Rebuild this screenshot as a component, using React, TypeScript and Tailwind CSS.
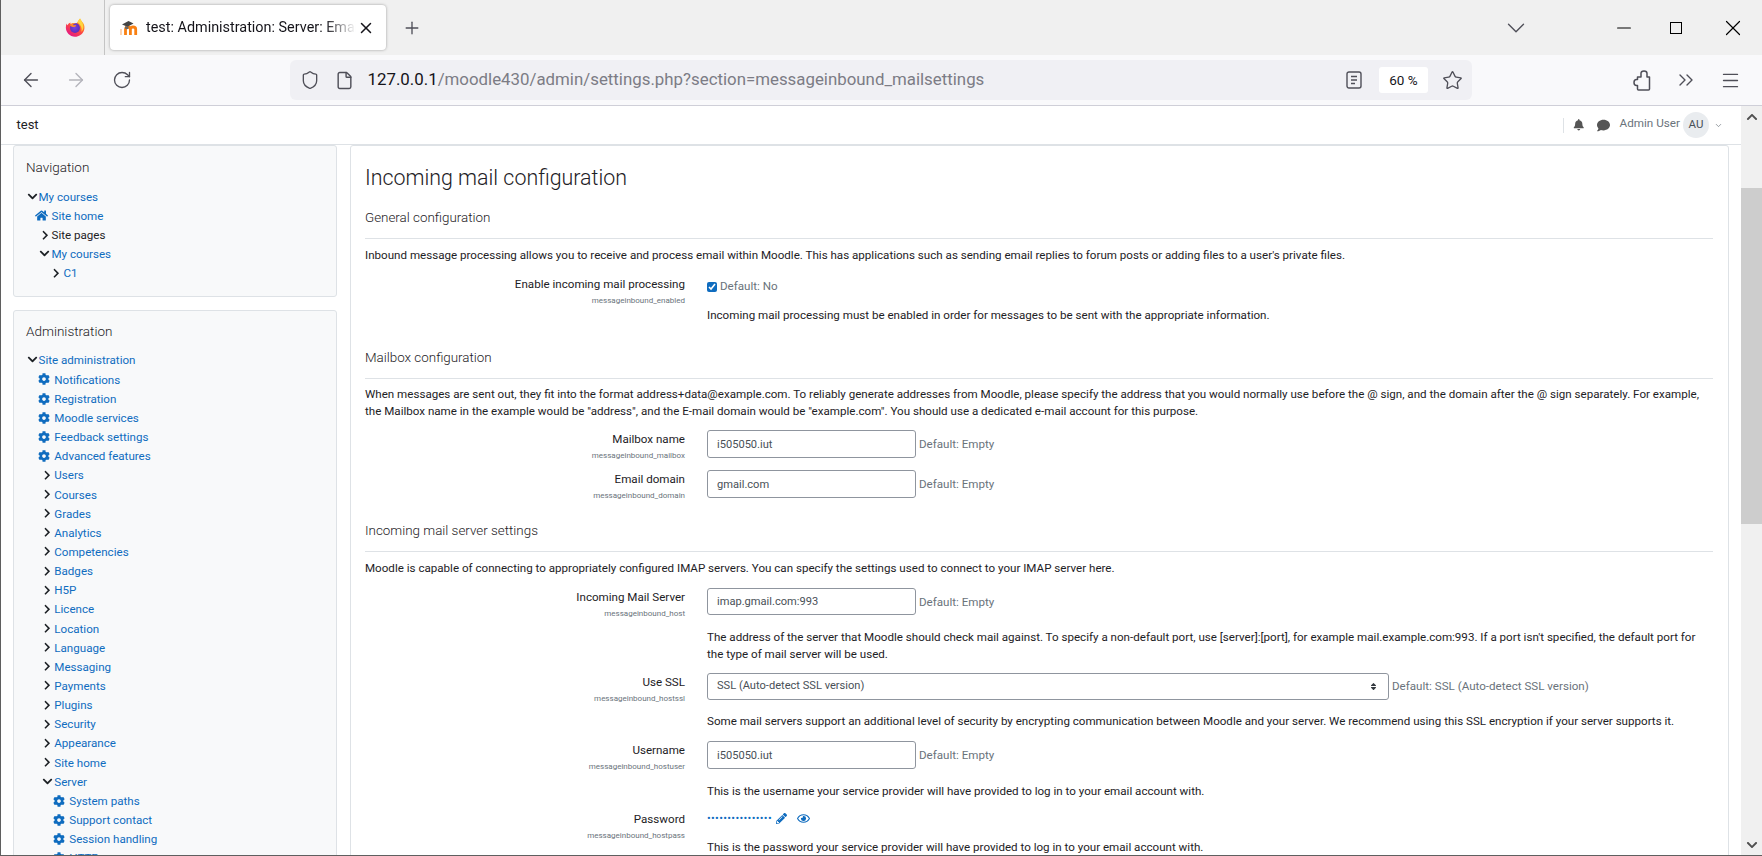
import React from "react";
import { ArrowLeft, ArrowRight, RotateCw, Shield, File, Star, ChevronsRight, Menu, X, Plus, ChevronDown, Minus } from "lucide-react";
import { FaChevronRight, FaChevronDown, FaChevronUp, FaHome, FaCog, FaPencilAlt, FaRegEye, FaBell, FaComment, FaSort } from "react-icons/fa";

const font = "font-['Roboto','Noto_Sans',sans-serif]";

function FirefoxLogo() {
  return (
    <svg width="22" height="22" viewBox="0 0 24 24">
      <defs>
        <linearGradient id="ffa" x1="0.8" y1="0.1" x2="0.2" y2="0.95">
          <stop offset="0" stopColor="#ffb322" />
          <stop offset="0.45" stopColor="#ff4f3a" />
          <stop offset="1" stopColor="#e31587" />
        </linearGradient>
        <radialGradient id="ffb" cx="0.45" cy="0.45" r="0.6">
          <stop offset="0" stopColor="#7542e5" />
          <stop offset="1" stopColor="#5b2bb5" />
        </radialGradient>
      </defs>
      <path d="M17.5 1.5c.6 2 2.2 3.1 3.4 5 1.6 2.4 1.9 5.7.8 8.4-1.500 3.900-5.400 6.600-9.700 6.600-5.600 0-10-4.500-10-10 0-1.700.4-3.200 1-4.400.2 1 .5 1.400 1 1.900.5-1.500 1.700-2.600 3-3-.2.7-.1 1.200.3 1.700 1.800-.6 3.800-.3 5.600.5 1.200-2 2.900-4.400 4.600-6.700z" fill="url(#ffa)" />
      <circle cx="12" cy="12" r="5.4" fill="url(#ffb)" />
      <path d="M6.500 8.500c1.600-1.600 4.400-2.400 6.800-1.600-2 .2-3.400 1-3.600 2.200h3.200c.3 0 .5.4.3.6-.7.6-1.600 1-2.600 1.200-1.200.2-2.400-.2-3.300-1-.4-.4-.7-.9-.8-1.400z" fill="#ff8a2a" />
      <path d="M17.500 1.500c1.600 3 3.600 5.500 3.600 9.300 0 2.200-.9 4-2.200 5.400.9-2.900.2-6.100-2-8.400-.7-.7-1.400-1.200-2.300-1.700.6-1.700 1.600-3.300 2.900-4.600z" fill="#ffd53d" />
    </svg>
  );
}

function MoodleLogo() {
  return (
    <svg width="21" height="16" viewBox="0 0 21 16">
      <path d="M1 9v6" stroke="#fbc9a0" strokeWidth="1.6" fill="none" />
      <path d="M5.500 15V9.200c0-1.400 1-2.200 2.400-2.200s2.500.8 2.500 2.200V15M10.400 9.200c0-1.400 1.100-2.200 2.600-2.200s2.700.8 2.700 2.200V15" stroke="#f98012" strokeWidth="2.8" fill="none" />
      <path d="M2 4.600 8.500 1l5 2.400-6 3.400z" fill="#444" />
      <path d="M5 6.200v2.400c1.200.8 2.400.8 3.500.2V6.200L7.400 6.800z" fill="#666" />
    </svg>
  );
}

function PuzzleIcon() {
  return (
    <svg width="18" height="21" viewBox="0 0 18 21" fill="none" stroke="#4f4f58" strokeWidth="1.5" strokeLinejoin="round">
      <path d="M4.500 7H8V3.200C8 1.700 9.500 1 11 1s3 .8 3 2.500V7h2.500v12a1 1 0 0 1-1 1h-10a1 1 0 0 1-1-1v-3.500h-1C2 15.500 1 14 1 12.500S2 9.500 3.500 9.500h1z" />
    </svg>
  );
}

type RowProps = { text: string; kind: "open0" | "home" | "gear" | "closed" | "closedDark" | "open1" | "c1" | "sub" | "openNav1" };

function TreeRow({ text, kind }: RowProps) {
  const dark = kind === "closedDark";
  const label = dark ? "text-[#1d2125]" : "text-[#0f6cbf]";
  let icon: React.ReactNode = null;
  if (kind === "open0") icon = <span className="w-[11.5px] shrink-0 flex"><FaChevronDown className="text-[11px] text-[#1d2125]" /></span>;
  if (kind === "home") icon = <span className="ml-[8px] w-[16.5px] shrink-0 flex"><FaHome className="text-[13px] text-[#0f6cbf]" /></span>;
  if (kind === "gear") icon = <span className="ml-[11px] w-[16.3px] shrink-0 flex"><FaCog className="text-[12px] text-[#0f6cbf]" /></span>;
  if (kind === "closed" || kind === "closedDark") icon = <span className={(kind === "closed" ? "ml-[15px] w-[12.3px]" : "ml-[12.500px] w-[12px]") + " shrink-0 flex"}><FaChevronRight className="text-[10.500px] text-[#1d2125]" /></span>;
  if (kind === "open1") icon = <span className="ml-[14.500px] w-[12.800px] shrink-0 flex"><FaChevronDown className="text-[11px] text-[#1d2125]" /></span>;
  if (kind === "openNav1") icon = <span className="ml-[11.500px] w-[13px] shrink-0 flex"><FaChevronDown className="text-[11px] text-[#1d2125]" /></span>;
  if (kind === "c1") icon = <span className="ml-[24px] w-[12.500px] shrink-0 flex"><FaChevronRight className="text-[10.500px] text-[#1d2125]" /></span>;
  if (kind === "sub") icon = <span className="ml-[26px] w-[16.300px] shrink-0 flex"><FaCog className="text-[12px] text-[#0f6cbf]" /></span>;
  return (
    <div className={"h-[19.150px] flex items-center text-[11.600px] whitespace-nowrap [&_svg]:-translate-y-px " + label}>
      {icon}
      <span>{text}</span>
    </div>
  );
}

function Section({ title }: { title: string }) {
  return (
    <div className="h-[32px] border-b border-[#dee2e6] text-[13.400px] leading-[20px] font-light text-[#1d2125]">
      <div className="translate-y-px">{title}</div>
    </div>
  );
}

function Label({ title, id }: { title: string; id: string }) {
  return (
    <div className="w-[320px] h-[26px] mr-[22px] shrink-0 text-right translate-y-px">
      <div className="h-[17px] leading-[17px] text-[11.600px] text-[#1d2125]">{title}</div>
      <div className="h-[13px] leading-[13px] mt-[1px] text-[8px] text-[#6a737b]">{id}</div>
    </div>
  );
}

function TextInput({ value, h }: { value: string; h: string }) {
  return (
    <div className="flex items-center">
      <input readOnly value={value} className={"w-[209px] border border-[#8f959e] rounded-[3px] pl-[9px] text-[11.100px] text-[#495057] bg-white outline-none " + h} />
      <span className="ml-[3px] text-[11.600px] text-[#6a737b] translate-y-px">Default: Empty</span>
    </div>
  );
}

const P = "text-[11.600px] leading-[17px] text-[#1d2125] translate-y-px";

export default function App() {
  return (
    <div className={"w-[1762px] h-[856px] overflow-hidden flex flex-col bg-white border-l border-b border-[#5f5f5f] " + font}>
      {/* tab strip */}
      <div className="h-[55px] shrink-0 bg-[#f0f0f0] flex items-center text-[#15141a]">
        <div className="w-[104px] h-full border-r border-[#c4c4c4] flex items-center justify-end pr-[18px] shrink-0"><FirefoxLogo /></div>
        <div className="ml-[5px] w-[276px] h-[45px] rounded-[4px] bg-white shadow-[0_0_3px_rgba(0,0,0,0.35)] flex items-center pl-[10px] shrink-0">
          <MoodleLogo />
          <span className="ml-[5px] w-[210px] overflow-hidden whitespace-nowrap text-[14.400px] [mask-image:linear-gradient(to_right,#000_85%,transparent)]">test: Administration: Server: Email</span>
          <X size={18} strokeWidth={2} className="ml-[1px]" />
        </div>
        <Plus size={20} strokeWidth={1.6} className="ml-[16px] text-[#4f4f58]" />
        <ChevronDown size={30} strokeWidth={1.1} className="ml-auto mr-[82px] text-[#4f4f58]" />
        <Minus size={22} strokeWidth={1.2} className="mr-[35px] text-black" />
        <div className="w-[12px] h-[12px] border border-black mr-[38px]" />
        <X size={26} strokeWidth={1.1} className="mr-[16px] text-black" />
      </div>
      {/* toolbar */}
      <div className="h-[51px] shrink-0 bg-[#f9f9fb] border-b border-[#cfcfd8] flex items-center text-[#4f4f58]">
        <ArrowLeft size={22} strokeWidth={1.5} className="ml-[19px]" />
        <ArrowRight size={22} strokeWidth={1.5} className="ml-[23px] text-[#b4b4bb]" />
        <RotateCw size={20} strokeWidth={1.6} className="ml-[25px]" />
        <div className="ml-[158px] w-[1182px] h-[40px] rounded-[6px] bg-[#f0f0f4] flex items-center">
          <Shield size={20} strokeWidth={1.6} className="ml-[10px]" />
          <File size={19} strokeWidth={1.8} className="ml-[15px]" />
          <span className="ml-[13.500px] text-[16.850px] text-[#7c7c85] whitespace-nowrap"><span className="text-[#15141a]">127.0.0.1</span>/moodle430/admin/settings.php?section=messageinbound_mailsettings</span>
          <svg width="16" height="18" viewBox="0 0 16 18" fill="none" stroke="#4f4f58" strokeWidth="1.4" className="ml-auto"><rect x="1" y="1" width="14" height="16" rx="2" /><path d="M5 5.500h6M5 9h6M5 12.500h4" /></svg>
          <div className="ml-[17px] w-[49px] h-[26px] rounded-[3px] bg-white flex items-center justify-center text-[13.500px] text-[#15141a]">60 %</div>
          <Star size={21} strokeWidth={1.5} className="ml-[14px] mr-[9px]" />
        </div>
        <div className="ml-[161px]"><PuzzleIcon /></div>
        <ChevronsRight size={24} strokeWidth={1.4} className="ml-[23px]" />
        <Menu size={21} strokeWidth={1.5} className="ml-[22px]" />
      </div>
      {/* page */}
      <div className="flex-1 min-h-0 flex">
        <div className="flex-1 min-w-0 flex flex-col overflow-hidden">
          <div className="h-[39px] shrink-0 border-b border-[#dee2e6] flex items-center pl-[15.500px] text-[#1d2125]">
            <span className="text-[13px]">test</span>
            <div className="ml-auto w-px h-[15px] bg-[#dee2e6]" />
            <FaBell className="ml-[9.500px] text-[11.500px] text-[#555]" />
            <FaComment className="ml-[12px] text-[13px] text-[#555]" />
            <span className="ml-[10px] mb-[3px] text-[11.700px] text-[#6a737b]">Admin User</span>
            <div className="ml-[3px] w-[26px] h-[26px] rounded-full bg-[#e9ecef] flex items-center justify-center text-[11.500px] text-[#495057]">AU</div>
            <ChevronDown size={9} strokeWidth={1.8} className="ml-[5px] mr-[18px] text-[#6a737b]" />
          </div>
          <div className="flex-1 min-h-0 flex gap-[13px] pl-[12px] pr-[12px]">
            {/* sidebar */}
            <div className="w-[324px] shrink-0">
              <div className="border border-[#dee2e6] rounded-[3px] bg-[#f8f9fa] pl-[13px] pt-[12px] pb-[12px]">
                <div className="h-[20px] -ml-px -translate-y-px leading-[20px] text-[13.500px] font-light text-[#1d2125]">Navigation</div>
                <div className="mt-[10px]">
                  <TreeRow kind="open0" text="My courses" />
                  <TreeRow kind="home" text="Site home" />
                  <TreeRow kind="closedDark" text="Site pages" />
                  <TreeRow kind="openNav1" text="My courses" />
                  <TreeRow kind="c1" text="C1" />
                </div>
              </div>
              <div className="mt-[13px] border border-[#dee2e6] rounded-[3px] bg-[#f8f9fa] pl-[13px] pt-[10px] h-[700px]">
                <div className="h-[20px] -ml-px leading-[20px] text-[13.500px] font-light text-[#1d2125]">Administration</div>
                <div className="mt-[10px]">
                  <div className="mb-px"><TreeRow kind="open0" text="Site administration" /></div>
                  {["Notifications", "Registration", "Moodle services", "Feedback settings", "Advanced features"].map((t) => <TreeRow key={t} kind="gear" text={t} />)}
                  {["Users", "Courses", "Grades", "Analytics", "Competencies", "Badges", "H5P", "Licence", "Location", "Language", "Messaging", "Payments", "Plugins", "Security", "Appearance", "Site home"].map((t) => <TreeRow key={t} kind="closed" text={t} />)}
                  <TreeRow kind="open1" text="Server" />
                  {["System paths", "Support contact", "Session handling", "HTTP"].map((t) => <TreeRow key={t} kind="sub" text={t} />)}
                </div>
              </div>
            </div>
            {/* main */}
            <div className="flex-1 min-w-0 h-[760px] border border-[#dee2e6] rounded-[3px] bg-white pl-[14px] pr-[15px] pt-[15px]">
              <div className="h-[30px] leading-[30px] translate-y-[1.500px] text-[21.400px] font-light text-[#1d2125]">Incoming mail configuration</div>
              <div className="mt-[16px]"><Section title="General configuration" /></div>
              <div className={"mt-[7px] " + P}>Inbound message processing allows you to receive and process email within Moodle. This has applications such as sending email replies to forum posts or adding files to a user's private files.</div>
              <div className="mt-[12px] flex">
                <Label title="Enable incoming mail processing" id="messageinbound_enabled" />
                <div className="flex-1">
                  <div className="mt-[1px] h-[20px] flex items-center translate-y-px">
                    <input type="checkbox" checked readOnly className="w-[10px] h-[10px] accent-[#0f6cbf]" />
                    <span className="ml-[3px] text-[11.600px] text-[#6a737b]">Default: No</span>
                  </div>
                  <div className={"mt-[10px] " + P}>Incoming mail processing must be enabled in order for messages to be sent with the appropriate information.</div>
                </div>
              </div>
              <div className="mt-[24px]"><Section title="Mailbox configuration" /></div>
              <div className={"mt-[6px] " + P}>When messages are sent out, they fit into the format address+data@example.com. To reliably generate addresses from Moodle, please specify the address that you would normally use before the @ sign, and the domain after the @ sign separately. For example, the Mailbox name in the example would be "address", and the E-mail domain would be "example.com". You should use a dedicated e-mail account for this purpose.</div>
              <div className="mt-[11px] flex">
                <Label title="Mailbox name" id="messageinbound_mailbox" />
                <TextInput value="i505050.iut" h="h-[28px]" />
              </div>
              <div className="mt-[12px] flex">
                <Label title="Email domain" id="messageinbound_domain" />
                <TextInput value="gmail.com" h="h-[28px]" />
              </div>
              <div className="mt-[22px]"><Section title="Incoming mail server settings" /></div>
              <div className={"mt-[7px] " + P}>Moodle is capable of connecting to appropriately configured IMAP servers. You can specify the settings used to connect to your IMAP server here.</div>
              <div className="mt-[12px] flex">
                <Label title="Incoming Mail Server" id="messageinbound_host" />
                <div className="flex-1">
                  <TextInput value="imap.gmail.com:993" h="h-[27px]" />
                  <div className={"mt-[13px] " + P}>The address of the server that Moodle should check mail against. To specify a non-default port, use [server]:[port], for example mail.example.com:993. If a port isn't specified, the default port for the type of mail server will be used.</div>
                </div>
              </div>
              <div className="mt-[11px] flex">
                <Label title="Use SSL" id="messageinbound_hostssl" />
                <div className="flex-1">
                  <div className="flex items-center">
                    <div className="w-[682px] h-[27px] border border-[#8f959e] rounded-[3px] pl-[9px] pr-[10px] flex items-center justify-between text-[11.100px] text-[#495057]">
                      <span>SSL (Auto-detect SSL version)</span>
                      <FaSort className="text-[9px] text-[#343a40]" />
                    </div>
                    <span className="ml-[3px] text-[11.600px] text-[#6a737b]">Default: SSL (Auto-detect SSL version)</span>
                  </div>
                  <div className={"mt-[12px] " + P}>Some mail servers support an additional level of security by encrypting communication between Moodle and your server. We recommend using this SSL encryption if your server supports it.</div>
                </div>
              </div>
              <div className="mt-[12px] flex">
                <Label title="Username" id="messageinbound_hostuser" />
                <div className="flex-1">
                  <TextInput value="i505050.iut" h="h-[28px]" />
                  <div className={"mt-[13px] " + P}>This is the username your service provider will have provided to log in to your email account with.</div>
                </div>
              </div>
              <div className="mt-[11px] flex">
                <Label title="Password" id="messageinbound_hostpass" />
                <div className="flex-1">
                  <div className="h-[17px] flex items-center text-[#0f6cbf]">
                    <span className="text-[11px] tracking-[0.35px] leading-none">••••••••••••••••</span>
                    <FaPencilAlt className="ml-[4px] text-[11px]" />
                    <FaRegEye className="ml-[10px] text-[13px]" />
                  </div>
                  <div className={"mt-[11px] " + P}>This is the password your service provider will have provided to log in to your email account with.</div>
                </div>
              </div>
            </div>
          </div>
        </div>
        {/* scrollbar */}
        <div className="w-[21px] shrink-0 bg-[#f0f0f0] flex flex-col items-stretch">
          <div className="h-[82px] shrink-0 flex justify-center pt-[5px]"><FaChevronUp className="text-[12px] text-[#505050]" /></div>
          <div className="h-[336px] shrink-0 bg-[#cdcdcd]" />
          <div className="flex-1 flex justify-center items-end pb-[4px]"><FaChevronDown className="text-[12px] text-[#505050]" /></div>
        </div>
      </div>
    </div>
  );
}
